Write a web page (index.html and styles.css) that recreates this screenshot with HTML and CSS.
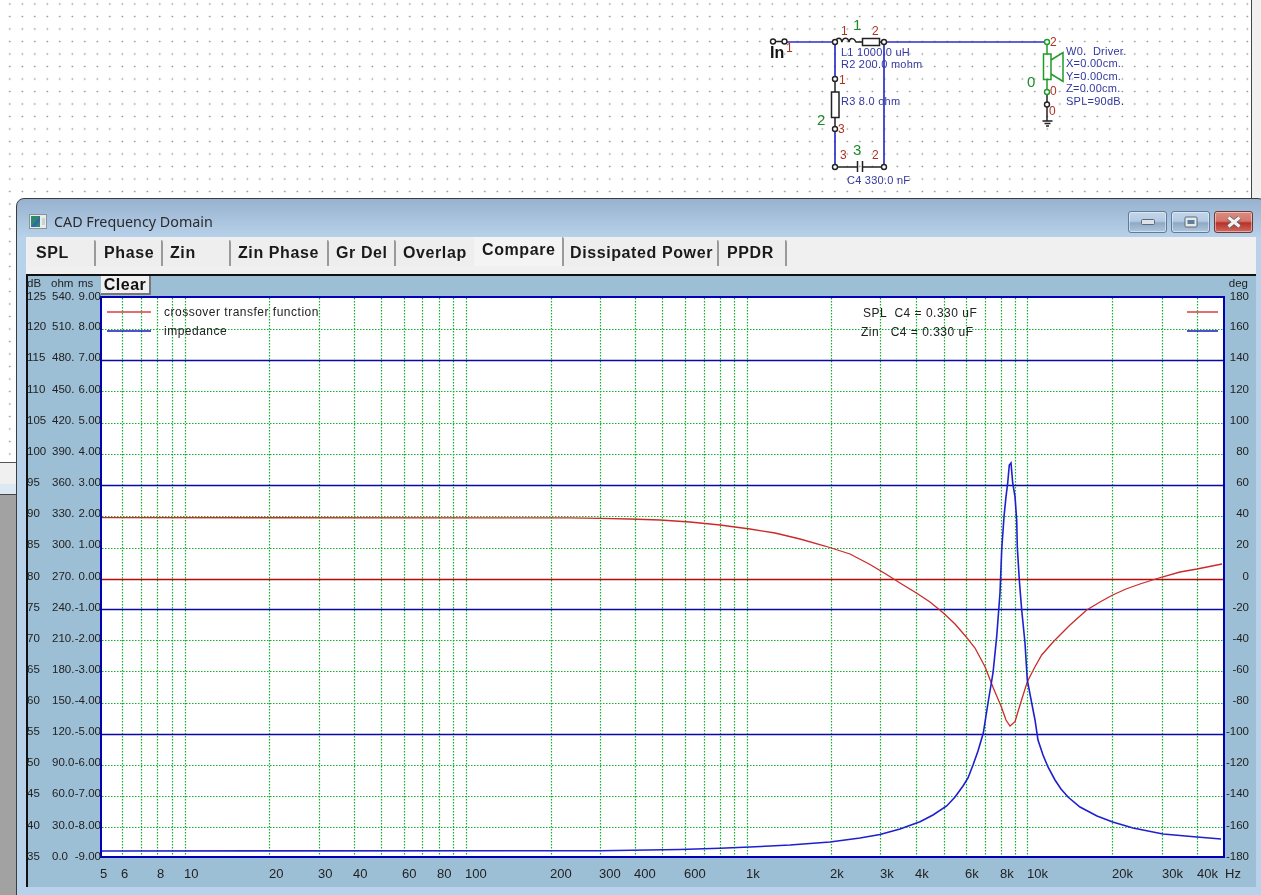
FILE: index.html
```html
<!DOCTYPE html>
<html lang="en">
<head>
<meta charset="utf-8">
<title>CAD Frequency Domain</title>
<link rel="stylesheet" href="styles.css">
</head>
<body>
<main class="desktop">
  <section class="canvas">
    <svg class="schematic" viewBox="0 0 1251 197" width="1251" height="197">
      <g class="wire-blue">
        <path d="M785 42H835M884 42H1047M835 42V79M835 129V167M884 42V167"/>
      </g>
      <g class="part-black">
        <path d="M773 41.5L784 41.5"/>
        <path d="M835 42c2-5 6-5 7 0c1-5 6-5 7 0c1-5 5-4 7 0h6M879 42h5"/>
        <rect x="862.5" y="38.5" width="17" height="7" class="box"/>
        <path d="M835 79V92M835 117V129"/>
        <rect x="831.5" y="92" width="7.500" height="25.500" class="box"/>
        <path d="M835 167H857.500M862.500 167H884M857.500 161V172M862.500 161V172"/>
        <path d="M1047 92V121M1042.500 121H1052.500M1044.500 123.500H1050.500M1046 126H1049"/>
      </g>
      <g class="part-green">
        <path d="M1047 42V54M1047 79V92"/>
        <rect x="1043.500" y="54" width="7.500" height="25.500"/>
        <path d="M1051 60L1063 52.500V81.500L1051 74"/>
        <circle cx="1047" cy="42" r="2.500" class="node"/>
        <circle cx="1047" cy="92" r="2.500" class="node"/>
      </g>
      <g class="nodes">
        <circle cx="773" cy="41.500" r="2.500"/>
        <circle cx="784.500" cy="41.500" r="2.500"/>
        <circle cx="835" cy="42" r="2.500"/>
        <circle cx="884" cy="42" r="2.500"/>
        <circle cx="835" cy="79" r="2.500"/>
        <circle cx="835" cy="129" r="2.500"/>
        <circle cx="835" cy="167" r="2.500"/>
        <circle cx="884" cy="167" r="2.500"/>
        <circle cx="1047" cy="104.500" r="2.500"/>
      </g>
      <text x="770" y="58" class="sch-in">In</text>
      <g class="sch-red">
        <text x="786" y="52">1</text>
        <text x="841" y="35">1</text>
        <text x="872" y="35">2</text>
        <text x="839" y="84">1</text>
        <text x="838" y="133">3</text>
        <text x="840" y="159">3</text>
        <text x="872" y="159">2</text>
        <text x="1050" y="46">2</text>
        <text x="1050" y="95">0</text>
        <text x="1049" y="115">0</text>
      </g>
      <g class="sch-green">
        <text x="853" y="30">1</text>
        <text x="817" y="125">2</text>
        <text x="853" y="155">3</text>
        <text x="1027" y="87">0</text>
      </g>
      <g class="sch-blue">
        <text x="841" y="56">L1 1000.0 uH</text>
        <text x="841" y="67.500">R2 200.0 mohm</text>
        <text x="841" y="105">R3 8.0 ohm</text>
        <text x="847" y="183.500">C4 330.0 nF</text>
        <text x="1066" y="55">W0.  Driver.</text>
        <text x="1066" y="67">X=0.00cm.</text>
        <text x="1066" y="80">Y=0.00cm.</text>
        <text x="1066" y="92">Z=0.00cm.</text>
        <text x="1066" y="105">SPL=90dB.</text>
      </g>
    </svg>
  </section>
  <div class="strip"></div>
  <div class="workspace"></div>

  <section class="window">
    <header class="titlebar">
      <svg class="app-icon" viewBox="0 0 18 15" width="18" height="15">
        <rect x="0.500" y="0.500" width="17" height="14" fill="#e8ecec" stroke="#8a9298"/>
        <rect x="2" y="2" width="9" height="11" fill="#2e8a6c"/>
        <path d="M2 13L11 2V7L6 13Z" fill="#3566a8"/>
        <rect x="13" y="4" width="3" height="7" fill="#c8d4cc"/>
      </svg>
      <h1 class="title">CAD Frequency Domain</h1>
      <div class="controls">
        <span class="ctl"><svg viewBox="0 0 14 8" width="14" height="8"><rect x="0.500" y="1.500" width="13" height="5" rx="1" fill="#dfe3e6" stroke="#5d6b78"/></svg></span>
        <span class="ctl"><svg viewBox="0 0 14 12" width="14" height="12"><rect x="1" y="1" width="12" height="10" rx="1" fill="#e6e8ea" stroke="#5d6b78"/><rect x="3.500" y="4" width="7" height="4" fill="#5d7d9a"/></svg></span>
        <span class="ctl ctl-close"><svg viewBox="0 0 16 12" width="16" height="12"><path d="M2.500 1.500L13.500 10.500M13.500 1.500L2.500 10.500" stroke="#596068" stroke-width="4.500"/><path d="M2.500 1.500L13.500 10.500M13.500 1.500L2.500 10.500" stroke="#f2f2f2" stroke-width="3"/></svg></span>
      </div>
    </header>

    <nav class="tabs">
      <span class="tab tab-spl">SPL</span>
      <span class="tab tab-phase">Phase</span>
      <span class="tab tab-zin">Zin</span>
      <span class="tab tab-zinphase">Zin Phase</span>
      <span class="tab tab-grdel">Gr Del</span>
      <span class="tab tab-overlap">Overlap</span>
      <span class="tab tab-compare">Compare</span>
      <span class="tab tab-power">Dissipated Power</span>
      <span class="tab tab-ppdr">PPDR</span>
    </nav>

    <section class="panel">
      <button class="clear" type="button">Clear</button>
      <svg class="chart" viewBox="26 276 1230 611" width="1230" height="611">
        <rect x="101" y="297" width="1123" height="560" class="plot-bg"/>
        <path class="grid-green" d="M122.500 298V856M141.500 298V856M157.500 298V856M172.500 298V856M185.500 298V856M269.500 298V856M319.500 298V856M354.500 298V856M381.500 298V856M404.500 298V856M422.500 298V856M439.500 298V856M453.500 298V856M466.500 298V856M551.500 298V856M600.500 298V856M635.500 298V856M662.500 298V856M685.500 298V856M704.500 298V856M720.500 298V856M734.500 298V856M747.500 298V856M831.500 298V856M880.500 298V856M916.500 298V856M944.500 298V856M966.500 298V856M985.500 298V856M1001.500 298V856M1015.500 298V856M1027.500 298V856M1112.500 298V856M1162.500 298V856M1197.500 298V856"/>
        <path class="grid-green" d="M102 329.500H1223M102 391.500H1223M102 423.500H1223M102 454.500H1223M102 516.500H1223M102 548.500H1223M102 640.500H1223M102 671.500H1223M102 703.500H1223M102 765.500H1223M102 796.500H1223M102 827.500H1223"/>
        <path class="grid-blue" d="M102 360.500H1223M102 485.500H1223M102 609.500H1223M102 734.500H1223"/>
        <path class="grid-red" d="M102 579.500H1223"/>
        <polyline class="curve-red" points="102,517.700 570,517.800 600,518.300 630,519 660,520 690,522 720,525 750,529 775,533 800,539 825,546 850,554 870,564.500 885,573.500 900,583 916,592.700 930,602 943.700,613.300 955,624 966,636.700 975,648 985,666.700 993.300,688 1001.300,706.700 1006,720 1010,726 1015,721.700 1020,705 1027.300,681.700 1035,666.700 1041.700,655 1053.300,641.700 1070,625 1086.700,610 1100,602 1112.700,595 1126,589 1140,584 1162,577 1180,572 1197,569 1222,564"/>
        <polyline class="curve-blue" points="102,851 600,850.700 680,849.500 720,848.300 750,847 790,845 830,842 860,838 880,834.500 900,829 920,821.700 933,815 946.700,806 955,797 963,786 968,778 973,765 978,751 983.300,733 988,703 993,673 996.700,636.700 1000,593 1001.700,550 1004,516.700 1006,496.700 1007.700,483 1009.300,465 1011,463 1012.700,483 1015,496.700 1016.700,520 1017.300,546.700 1019.300,580 1021.700,610 1025,643 1027.300,680 1031.700,703 1035,720 1038,740 1043,755 1048,767 1055,780 1061,789 1068,797 1080,807 1097,816 1112.700,822 1133,828 1163,834 1197,837 1221,839"/>
        <rect x="101" y="297" width="1123" height="560" class="plot-frame"/>

        <path class="legend-red" d="M107 312H151M1187 312H1218"/>
        <path class="legend-blue" d="M107 331H151M1187 331H1218"/>
        <g class="legend">
          <text x="164" y="316">crossover transfer function</text>
          <text x="164" y="335">impedance</text>
          <text x="863" y="317">SPL  C4 = 0.330 uF</text>
          <text x="861" y="336">Zin   C4 = 0.330 uF</text>
        </g>

        <g class="axis">
          <text x="27" y="287">dB</text><text x="51" y="287">ohm</text><text x="78" y="287">ms</text>
          <text x="27" y="300">125</text><text x="52" y="300">540.</text><text x="101" y="300" class="end">9.00</text>
          <text x="27" y="330">120</text><text x="52" y="330">510.</text><text x="101" y="330" class="end">8.00</text>
          <text x="27" y="361">115</text><text x="52" y="361">480.</text><text x="101" y="361" class="end">7.00</text>
          <text x="27" y="393">110</text><text x="52" y="393">450.</text><text x="101" y="393" class="end">6.00</text>
          <text x="27" y="424">105</text><text x="52" y="424">420.</text><text x="101" y="424" class="end">5.00</text>
          <text x="27" y="455">100</text><text x="52" y="455">390.</text><text x="101" y="455" class="end">4.00</text>
          <text x="27" y="486">95</text><text x="52" y="486">360.</text><text x="101" y="486" class="end">3.00</text>
          <text x="27" y="517">90</text><text x="52" y="517">330.</text><text x="101" y="517" class="end">2.00</text>
          <text x="27" y="548">85</text><text x="52" y="548">300.</text><text x="101" y="548" class="end">1.00</text>
          <text x="27" y="580">80</text><text x="52" y="580">270.</text><text x="101" y="580" class="end">0.00</text>
          <text x="27" y="611">75</text><text x="52" y="611">240.</text><text x="101" y="611" class="end">-1.00</text>
          <text x="27" y="642">70</text><text x="52" y="642">210.</text><text x="101" y="642" class="end">-2.00</text>
          <text x="27" y="673">65</text><text x="52" y="673">180.</text><text x="101" y="673" class="end">-3.00</text>
          <text x="27" y="704">60</text><text x="52" y="704">150.</text><text x="101" y="704" class="end">-4.00</text>
          <text x="27" y="735">55</text><text x="52" y="735">120.</text><text x="101" y="735" class="end">-5.00</text>
          <text x="27" y="766">50</text><text x="52" y="766">90.0</text><text x="101" y="766" class="end">-6.00</text>
          <text x="27" y="797">45</text><text x="52" y="797">60.0</text><text x="101" y="797" class="end">-7.00</text>
          <text x="27" y="829">40</text><text x="52" y="829">30.0</text><text x="101" y="829" class="end">-8.00</text>
          <text x="27" y="860">35</text><text x="52" y="860">0.0</text><text x="101" y="860" class="end">-9.00</text>
        </g>
        <g class="axis axis-right">
          <text x="1248" y="287">deg</text>
          <text x="1249" y="300">180</text><text x="1249" y="330">160</text><text x="1249" y="361">140</text>
          <text x="1249" y="393">120</text><text x="1249" y="424">100</text><text x="1249" y="455">80</text>
          <text x="1249" y="486">60</text><text x="1249" y="517">40</text><text x="1249" y="548">20</text>
          <text x="1249" y="580">0</text><text x="1249" y="611">-20</text><text x="1249" y="642">-40</text>
          <text x="1249" y="673">-60</text><text x="1249" y="704">-80</text><text x="1249" y="735">-100</text>
          <text x="1249" y="766">-120</text><text x="1249" y="797">-140</text><text x="1249" y="829">-160</text>
          <text x="1249" y="860">-180</text>
        </g>
        <g class="axis-x">
          <text x="100" y="878">5</text><text x="121" y="878">6</text><text x="157" y="878">8</text><text x="184" y="878">10</text>
          <text x="269" y="878">20</text><text x="318" y="878">30</text><text x="353" y="878">40</text><text x="402" y="878">60</text>
          <text x="437" y="878">80</text><text x="465" y="878">100</text><text x="550" y="878">200</text><text x="599" y="878">300</text>
          <text x="634" y="878">400</text><text x="684" y="878">600</text><text x="746" y="878">1k</text><text x="830" y="878">2k</text>
          <text x="880" y="878">3k</text><text x="915" y="878">4k</text><text x="965" y="878">6k</text><text x="1000" y="878">8k</text>
          <text x="1027" y="878">10k</text><text x="1112" y="878">20k</text><text x="1162" y="878">30k</text><text x="1197" y="878">40k</text>
          <text x="1225" y="878">Hz</text>
        </g>
      </svg>
    </section>
  </section>
</main>
</body>
</html>
```
FILE: styles.css
```css
* { box-sizing: border-box; }
html, body { margin: 0; padding: 0; }
body { width: 1261px; height: 895px; overflow: hidden; background: #f0f0f0; }

.desktop {
  position: relative;
  width: 1261px;
  height: 895px;
  overflow: hidden;
  display: flex;
  flex-direction: column;
  background: #f0f0f0;
  font-family: "Liberation Sans", Arial, sans-serif;
  filter: blur(0.4px);
}

.canvas {
  position: relative;
  flex: 0 0 463px;
  width: 1252px;
  background-color: #fff;
  background-image: radial-gradient(circle at center, #8a8a8a 0, #8a8a8a 0.6px, rgba(138,138,138,0) 1.1px);
  background-size: 12.5px 12.5px;
  background-position: 3.55px -2.25px;
  border-right: 1px solid #444;
  border-bottom: 1px solid #555;
}
.schematic { display: block; }
.schematic text { white-space: pre; }
.wire-blue path { fill: none; stroke: #2f2fc8; stroke-width: 1.7; }
.part-black path, .part-black rect { fill: none; stroke: #222; stroke-width: 1.5; }
.part-black .box { fill: #fff; }
.part-green path, .part-green rect { fill: none; stroke: #1f9a2a; stroke-width: 1.5; }
.part-green .node { fill: #fff; stroke: #1f9a2a; stroke-width: 1.4; }
.nodes circle { fill: #fff; stroke: #222; stroke-width: 1.4; }
.sch-in { font-size: 16px; font-weight: 700; fill: #111; }
.sch-red text { font-size: 12px; fill: #b03020; }
.sch-green text { font-size: 15px; fill: #1f8a2a; }
.sch-blue text { font-size: 11px; fill: #33389e; letter-spacing: 0.25px; }

.strip {
  flex: 0 0 32px;
  background: linear-gradient(#f0f0f0 0, #f0f0f0 21px, #dce8f2 21px, #dce8f2 32px);
  border-bottom: 1px solid #444;
}
.workspace { flex: 1 1 auto; background: #a2a2a2; }

.window {
  position: absolute;
  left: 16px;
  top: 198px;
  width: 1250px;
  height: 705px;
  display: flex;
  flex-direction: column;
  padding: 0 9px 0 9px;
  border: 1px solid #3c3c3c;
  border-top-left-radius: 8px;
  border-top-right-radius: 8px;
  background: linear-gradient(#97b2cf 0, #b9d2eb 39px, #b9d2eb 100%);
}

.titlebar {
  flex: 0 0 38px;
  display: flex;
  align-items: center;
  padding: 7px 0 0 3px;
}
.app-icon { flex: none; }
.title {
  margin: 0 0 0 7px;
  font-family: "Noto Sans", sans-serif;
  font-size: 14.3px;
  font-weight: 400;
  color: #2b2b2b;
}
.controls {
  margin-left: auto;
  margin-right: 3px;
  display: flex;
  gap: 4px;
}
.ctl {
  width: 39px;
  height: 22px;
  display: flex;
  align-items: center;
  justify-content: center;
  border: 1px solid #5f7b97;
  border-radius: 3px;
  background: linear-gradient(#c3d6ea 0, #b4cbe3 45%, #8fa9c4 55%, #aec7e0 100%);
  box-shadow: inset 0 0 0 1px rgba(255,255,255,.45);
}
.ctl-close {
  border-color: #6e3a38;
  background: linear-gradient(#dd8a80 0, #d4776c 45%, #b8312a 55%, #cf6a5f 100%);
}

.tabs {
  flex: 0 0 37px;
  display: flex;
  align-items: flex-start;
  padding: 3px 0 0 3px;
  background: #f0f0f0;
}
.tab {
  height: 26px;
  padding-left: 7px;
  font-size: 16px;
  font-weight: 700;
  line-height: 26px;
  letter-spacing: 0.6px;
  color: #1a1a1a;
  background: #eeeeee;
  border-right: 2px solid #9a9a9a;
  border-top-right-radius: 2px;
  white-space: nowrap;
}
.tab-spl { width: 67px; }
.tab-phase { width: 67px; padding-left: 8px; }
.tab-zin { width: 68px; }
.tab-zinphase { width: 98px; }
.tab-grdel { width: 67px; }
.tab-overlap { width: 78px; border-right: 0; }
.tab-compare {
  width: 90px;
  height: 29px;
  margin-top: -3px;
  padding-left: 8px;
  line-height: 25px;
  background: #f4f4f4;
}
.tab-power { width: 155px; padding-left: 6px; }
.tab-ppdr { width: 68px; padding-left: 8px; }

.panel {
  position: relative;
  flex: 0 0 613px;
  display: block;
  border-top: 2px solid #111;
  border-left: 2px solid #111;
  background: #9dbfd6;
}
.chart { display: block; margin-left: -2px; }
.clear {
  position: absolute;
  left: 73px;
  top: 0;
  width: 50px;
  height: 19px;
  padding: 0;
  font-family: "Liberation Sans", Arial, sans-serif;
  font-size: 16px;
  font-weight: 700;
  letter-spacing: 0.5px;
  color: #111;
  background: #f0f0f0;
  border: 0;
  border-right: 2px solid #777;
  border-bottom: 2px solid #777;
}

.plot-bg { fill: #fff; }
.plot-frame { fill: none; stroke: #0000b4; stroke-width: 2; }
.grid-green { fill: none; stroke: #12b02a; stroke-width: 1.2; stroke-dasharray: 1.5 1.5; }
.grid-blue { fill: none; stroke: #0a0a9e; stroke-width: 1.4; }
.grid-red { fill: none; stroke: #b80a0a; stroke-width: 1.4; }
.curve-red { fill: none; stroke: #cc2a2a; stroke-width: 1.3; }
.curve-blue { fill: none; stroke: #1f1fd0; stroke-width: 1.6; }
.legend-red { fill: none; stroke: #d84040; stroke-width: 1.5; }
.legend-blue { fill: none; stroke: #1818c0; stroke-width: 1.5; }
.legend text { font-size: 12px; fill: #222; white-space: pre; letter-spacing: 0.5px; }
.axis text { font-size: 11.5px; fill: #222; }
.axis .end { text-anchor: end; }
.axis-right text { text-anchor: end; }
.axis-x text { font-size: 13px; fill: #222; }
```
